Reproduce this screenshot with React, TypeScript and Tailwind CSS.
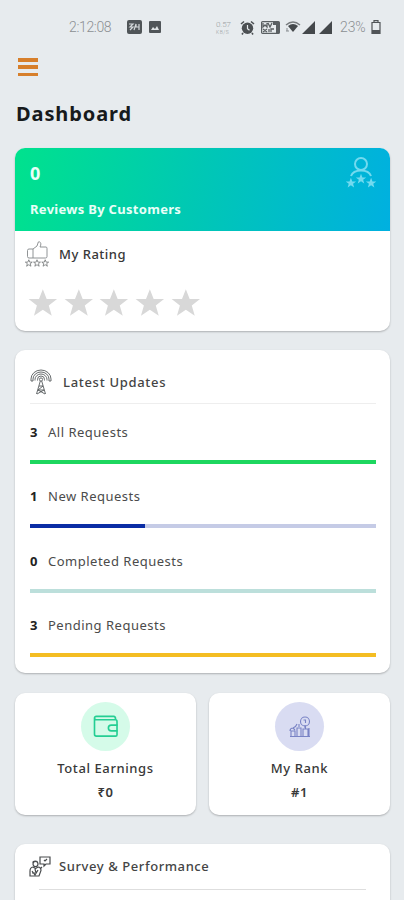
import type { ReactNode } from 'react'

const STAR = 'M12 0.8l3.1 8h8.4l-6.7 5.2 2.4 8.4L12 17.4l-7.2 5 2.4-8.4L0.5 8.8h8.4z'

const requests = [
  { count: 3, label: 'All Requests', track: 'bg-[#1dd75f]', bar: 'bg-[#1dd75f]', percent: 100 },
  { count: 1, label: 'New Requests', track: 'bg-[#c5cbe6]', bar: 'bg-[#0a2da5]', percent: 33.3 },
  { count: 0, label: 'Completed Requests', track: 'bg-[#bcdfdb]', bar: 'bg-[#1d9e8f]', percent: 0 },
  { count: 3, label: 'Pending Requests', track: 'bg-[#f4bd22]', bar: 'bg-[#f4bd22]', percent: 100 },
]

function StatusBar() {
  return (
    <div className="flex h-[54px] items-center pl-[69px] text-[14px] text-[#8b8f92]">
      <span className="w-[58px] tracking-[-0.35px] whitespace-nowrap">2:12:08</span>
      <svg className="h-[15px] w-[15px]" viewBox="0 0 15 15">
        <rect width="15" height="14" rx="2" fill="#505558" />
        <path d="M2 4h4L3 7h3L3 10M7 10l2-6v3h3v3M12 4v6" fill="none" stroke="#d5d9db" strokeWidth="1.2" />
      </svg>
      <svg className="ml-[7px] h-[12px] w-[12px]" viewBox="0 0 12 12">
        <rect width="12" height="12" rx="1" fill="#505558" />
        <path d="M2 9l2-3 2 2 2-3 2 4z" fill="#dfe3e5" />
      </svg>
      <div className="ml-[55px] flex w-[17px] flex-col text-[#9a9fa2]">
        <span className="text-[8px] leading-[9px] tracking-[-0.1px]">0.57</span>
        <span className="text-[5px] leading-[6px] tracking-[0.5px]">KB/S</span>
      </div>
      <svg className="ml-[7px] h-[15px] w-[15px]" viewBox="0 0 15 15">
        <circle cx="7.5" cy="8.3" r="5.7" fill="#4c5053" />
        <path d="M1 4l3-2.5M14 4l-3-2.5M3 13l-1 1.5M12 13l1 1.5" stroke="#4c5053" strokeWidth="1.6" />
        <path d="M7.5 5v3.7l2 1.5" fill="none" stroke="#e7ebed" strokeWidth="1.2" />
      </svg>
      <svg className="ml-[6px] h-[13px] w-[19px]" viewBox="0 0 19 13">
        <rect x="0.6" y="0.6" width="17.8" height="11.8" rx="1" fill="none" stroke="#5a5f62" strokeWidth="1.2" />
        <path d="M2 2v4l2-2 2 2V2M7 2l2 4 2-4M2 8l4 3M2 11l4-3M8 8v3M10 11V8h3" fill="none" stroke="#5a5f62" strokeWidth="1.3" />
        <path d="M12 1h6v11h-3V4h-3z" fill="#5a5f62" />
      </svg>
      <svg className="ml-[5px] h-[14px] w-[16px]" viewBox="0 0 16 14">
        <path d="M1 5q7-6 14 0" fill="none" stroke="#777b7d" strokeWidth="1.4" />
        <path d="M3 6q5-4 10 0l-5 6z" fill="#45494c" />
        <path d="M2 8v3M1 11h3" stroke="#888d90" />
      </svg>
      <svg className="ml-px h-[13px] w-[31px]" viewBox="0 0 31 13">
        <path d="M0 13L13 0v13zM17 13L30 0v13z" fill="#44484b" />
      </svg>
      <span className="ml-[7px] w-[31px] tracking-[-0.1px]">23%</span>
      <svg className="h-[14px] w-[10px]" viewBox="0 0 10 14">
        <path d="M3 2V.7h4V2M1 2.5h8v10.8H1z" fill="none" stroke="#505457" strokeWidth="1.2" />
        <path d="M1 10h8v3H1z" fill="#505457" />
      </svg>
    </div>
  )
}

function CustomerIcon() {
  return (
    <svg className="h-[32px] w-[32px]" viewBox="0 0 32 32" fill="none" stroke="#72daef" strokeWidth="2">
      <circle cx="16" cy="7" r="6" />
      <path d="M6 19q2-5.500 10-5.500T26 19" />
      <g fill="#72daef" stroke="none">
        <path transform="translate(.5 20.500) scale(.45)" d={STAR} />
        <path transform="translate(10.600 16.500) scale(.45)" d={STAR} />
        <path transform="translate(20.700 20.500) scale(.45)" d={STAR} />
      </g>
    </svg>
  )
}

function ThumbIcon() {
  return (
    <svg className="h-[26px] w-[24px]" viewBox="0 0 24 26" fill="none" stroke="#85888a" strokeWidth="0.9">
      <path d="M8 17V8l4-3 1-3q0-1.5 1.4-1.2Q17 2 15 6h6q1 0 1 1.5v8q0 1.5-1.500 1.500zM8 8H4Q2.500 8 2.500 9.500v6Q2.500 17 4 17h4" />
      <g stroke="#6f7274" strokeWidth="2.600">
        <path transform="translate(.2 18.500) scale(.3)" d={STAR} />
        <path transform="translate(8.400 18.500) scale(.3)" d={STAR} />
        <path transform="translate(16.600 18.500) scale(.3)" d={STAR} />
      </g>
    </svg>
  )
}

function AntennaIcon() {
  return (
    <svg className="h-[26px] w-[22px]" viewBox="0 0 22 26" fill="none" stroke="#565a5c" strokeWidth="0.9">
      <path d="M1 12V10a10 9 0 0 1 20 0v2M1 12h2v-2a8 7 0 0 1 16 0v2h2M5 11.500v-1a6 5.500 0 0 1 12 0v1M7.500 11.500v-1a3.500 3.500 0 0 1 7 0v1" />
      <circle cx="11" cy="10.500" r="1.600" />
      <path d="M10.300 12L6.500 25M11.700 12l3.800 13M9 17h4M8 21h6M8 21l5-4M7 25l7-4M8 21l7 4" />
    </svg>
  )
}

function SurveyIcon() {
  return (
    <svg className="h-[21px] w-[22px]" viewBox="0 0 22 21" fill="none" stroke="#484b4d" strokeWidth="1.2">
      <path d="M11 1h10v7h-4l-2 2v-2h-4z" />
      <path d="M15 4l1 1 2-2" />
      <circle cx="6.500" cy="8" r="2.500" />
      <path d="M3.500 6.500q1-2 5-1M1 20v-5q0-3.500 3-4l2.500 1.500L9 11q3 0 3 3.500L10 20zM3 15l3 4 3-5M3 17h3M6 13l1 4M11 13l2-2" />
    </svg>
  )
}

function WalletIcon() {
  return (
    <svg className="h-[23px] w-[26px]" viewBox="0 0 26 24" fill="none" stroke="#24ce93" strokeWidth="1.700">
      <path d="M1 3v17q0 2 2 2h20q1.500 0 1.500-1.500V7Q24.500 5 23 5H3Q1 5 1 3.200T3 1.500h18q2 0 2 3" />
      <path d="M25 10.500h-6.500a3 3 0 0 0 0 6H25" />
    </svg>
  )
}

function RankIcon() {
  return (
    <svg className="h-[22px] w-[22px]" viewBox="0 0 22 22" fill="none" stroke="#7983c5" strokeWidth="1.100">
      <path d="M1 20.500h20M2 20v-5h4v5M8 20v-8h4v8M14 20v-7h5v7M1 15q0-3 3-3 3-1 4-4M10 11V8M20 12v8M16.500 10v3M4 12l2 2" />
      <circle cx="16" cy="5.500" r="4.500" />
      <path d="M14.500 4h2v3M16 9v3" />
    </svg>
  )
}

function StatCard({ icon, tint, label, value }: { icon: ReactNode; tint: string; label: string; value: string }) {
  return (
    <div className="flex h-[121.5px] flex-1 flex-col items-center rounded-[10px] bg-white pt-[9px] shadow-[0_1px_2px_#00000040]">
      <div className={`flex h-[49px] w-[49px] items-center justify-center rounded-full ${tint}`}>{icon}</div>
      <div className="mt-[7px] text-[13px] leading-5 font-medium tracking-[0.6px] text-[#383838]">{label}</div>
      <div className="mt-[4px] text-[13px] leading-5 font-semibold tracking-[0.6px] text-[#383838]">{value}</div>
    </div>
  )
}

export default function App() {
  return (
    <div className="h-[900px] w-[404px] overflow-hidden bg-[#e7ebee] font-['Noto_Sans',sans-serif]">
      <div className="font-['Roboto',sans-serif] font-light">
        <StatusBar />
      </div>

      <div className="pr-[14px] pl-[15px]">
        <button className="mt-[4px] ml-[3px] flex h-[18px] w-5 flex-col justify-between">
          <span className="h-[3.5px] w-full bg-[#d77f2b]" />
          <span className="h-[3.5px] w-full bg-[#d77f2b]" />
          <span className="h-[3.5px] w-full bg-[#d77f2b]" />
        </button>
        <h1 className="mt-[23px] ml-px h-[30px] text-[20px] leading-[30px] font-bold tracking-[0.9px] text-[#171a1c]">Dashboard</h1>

        {/* Reviews */}
        <div className="mt-[19px] h-[183px] overflow-hidden rounded-[10px] bg-white shadow-[0_1px_2px_#00000040]">
          <div className="flex h-[83px] justify-between bg-linear-[100deg,#00e28d,#00c8b4_48%,#00b0e0] pr-[13px] pl-[15px] text-[#e9fff8]">
            <div>
              <div className="pt-[13px] text-[18px] leading-6 font-bold">0</div>
              <div className="mt-[14px] text-[13px] leading-5 font-bold tracking-[0.3px]">Reviews By Customers</div>
            </div>
            <div className="pt-[9px]">
              <CustomerIcon />
            </div>
          </div>
          <div className="flex items-center pt-[10px] pl-[10px]">
            <ThumbIcon />
            <span className="ml-[10px] text-[13px] leading-5 font-medium tracking-[0.5px] text-[#373737]">My Rating</span>
          </div>
          <div className="mt-[21px] ml-[13px] flex gap-[6px]">
            {[1, 2, 3, 4, 5].map((n) => (
              <svg key={n} className="h-[30px] w-[29.7px]" viewBox="0 0 24 24" fill="#d8d8d8">
                <path d={STAR} />
              </svg>
            ))}
          </div>
        </div>

        {/* Latest updates */}
        <div className="mt-[19px] h-[323px] rounded-[10px] bg-white pr-[14px] pl-[15px] shadow-[0_1px_2px_#00000040]">
          <div className="flex h-[54px] items-center border-b border-[#eeeeee] pt-[10px]">
            <AntennaIcon />
            <span className="ml-[11px] text-[13px] leading-5 font-medium tracking-[0.7px] text-[#444]">Latest Updates</span>
          </div>
          {requests.map((r) => (
            <div key={r.label} className="h-[64.5px] pt-[17.500px]">
              <div className="flex text-[13px] leading-5">
                <span className="w-[18px] font-bold text-[#222]">{r.count}</span>
                <span className="tracking-[0.5px] text-[#4b4b4b]">{r.label}</span>
              </div>
              <div className={`mt-[18px] h-[4px] ${r.track}`}>
                <div className={`h-full ${r.bar}`} style={{ width: `${r.percent}%` }} />
              </div>
            </div>
          ))}
        </div>

        <div className="mt-[20px] flex gap-[13px]">
          <StatCard icon={<WalletIcon />} tint="bg-[#d5fbe9]" label="Total Earnings" value="₹0" />
          <StatCard icon={<RankIcon />} tint="bg-[#d9dcf2]" label="My Rank" value="#1" />
        </div>

        {/* Survey */}
        <div className="mt-[29.500px] h-[180px] rounded-[10px] bg-white px-[24px] shadow-[0_1px_2px_#00000040]">
          <div className="flex h-[45.500px] items-center border-b border-[#dedede]">
            <div className="-ml-[10px]">
              <SurveyIcon />
            </div>
            <span className="ml-[8px] text-[13px] leading-5 font-medium tracking-[0.58px] text-[#444]">Survey &amp; Performance</span>
          </div>
        </div>
      </div>
    </div>
  )
}
